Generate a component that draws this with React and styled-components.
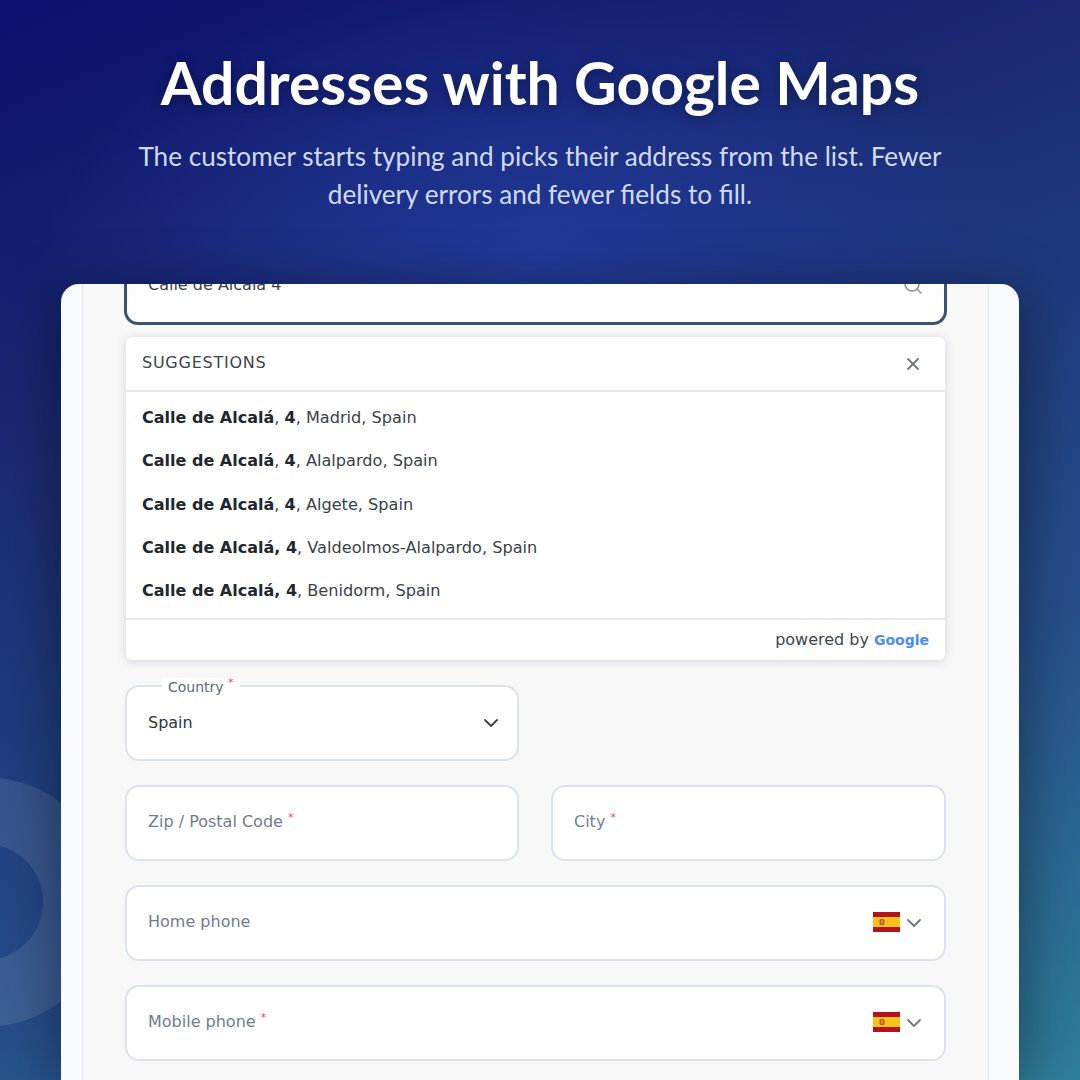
import React from 'react'
import styled, { createGlobalStyle } from 'styled-components'

const Global = createGlobalStyle`
  html, body { margin: 0; padding: 0; }
  body { width: 1080px; height: 1080px; overflow: hidden; font-family: "DejaVu Sans", sans-serif; }
`

const suggestions = [
  { main: 'Calle de Alcalá', sep: ', ', num: '4', rest: ', Madrid, Spain' },
  { main: 'Calle de Alcalá', sep: ', ', num: '4', rest: ', Alalpardo, Spain' },
  { main: 'Calle de Alcalá', sep: ', ', num: '4', rest: ', Algete, Spain' },
  { main: 'Calle de Alcalá, ', sep: '', num: '4', rest: ', Valdeolmos-Alalpardo, Spain' },
  { main: 'Calle de Alcalá, ', sep: '', num: '4', rest: ', Benidorm, Spain' },
]

const Chevron = ({ color = '#6b7684' }) => (
  <svg width="16" height="16" viewBox="0 0 16 16" fill="none" stroke={color} strokeWidth="1.8" strokeLinecap="round" strokeLinejoin="round">
    <path d="M2 5 L8 11 L14 5" />
  </svg>
)

const SpainFlag = () => (
  <FlagSvg width="27" height="20" viewBox="0 0 27 20">
    <rect width="27" height="20" fill="#b5121b" />
    <rect y="5" width="27" height="10" fill="#f6c21c" />
    <rect x="6.5" y="7" width="5" height="6" rx="1.5" fill="#c0562a" />
    <rect x="8" y="8.5" width="2" height="3" fill="#e09a3a" />
  </FlagSvg>
)

const App = () => (
  <Page>
    <Global />
    <RingDecor />
    <Hero>
      <Title>Addresses with Google Maps</Title>
      <Subtitle>
        The customer starts typing and picks their address from the list. Fewer delivery errors and fewer fields to fill.
      </Subtitle>
    </Hero>
    <Card>
      <Column>
        <SearchBox>
          <SearchText>Calle de Alcalá 4</SearchText>
          <SearchIcon width="20" height="20" viewBox="0 0 20 20" fill="none" stroke="#8b929b" strokeWidth="1.6" strokeLinecap="round">
            <circle cx="9" cy="9" r="7" />
            <path d="M14 14 L18 18" />
          </SearchIcon>
        </SearchBox>

        <Panel>
          <PanelHeader>
            <PanelTitle>SUGGESTIONS</PanelTitle>
            <svg width="12" height="12" viewBox="0 0 12 12" stroke="#6f7680" strokeWidth="1.8" strokeLinecap="round">
              <path d="M1 1 L11 11 M11 1 L1 11" />
            </svg>
          </PanelHeader>
          <SuggestionList>
            {suggestions.map((s) => (
              <Suggestion key={s.rest}>
                <b>{s.main}</b>{s.sep}<b>{s.num}</b>{s.rest}
              </Suggestion>
            ))}
          </SuggestionList>
          <PanelFooter>
            <PoweredBy>powered by</PoweredBy> <GoogleMark>Google</GoogleMark>
          </PanelFooter>
        </Panel>

        <FieldGrid>
          <Field>
            <FloatingLabel>Country <Star>*</Star></FloatingLabel>
            <Value>Spain</Value>
            <SelectArrow><Chevron color="#3a4149" /></SelectArrow>
          </Field>
          <div />
          <Field>
            <Placeholder>Zip / Postal Code <Star>*</Star></Placeholder>
          </Field>
          <Field>
            <Placeholder>City <Star>*</Star></Placeholder>
          </Field>
          <Field $wide>
            <Placeholder>Home phone</Placeholder>
            <PhoneAddon><SpainFlag /><Chevron /></PhoneAddon>
          </Field>
          <Field $wide>
            <Placeholder>Mobile phone <Star>*</Star></Placeholder>
            <PhoneAddon><SpainFlag /><Chevron /></PhoneAddon>
          </Field>
        </FieldGrid>
      </Column>
    </Card>
  </Page>
)

const Page = styled.div`
  position: relative;
  width: 1080px;
  height: 1080px;
  overflow: hidden;
  display: flex;
  flex-direction: column;
  align-items: center;
  background:
    radial-gradient(ellipse 500px 280px at 540px 260px, rgba(36, 62, 165, 0.75), rgba(36, 62, 165, 0) 100%),
    linear-gradient(158deg, #0c0f6e 0%, #1a2a72 30%, #264e8a 68%, #2f7f9b 100%);
`

const RingDecor = styled.div`
  position: absolute;
  left: -140px;
  top: 777px;
  width: 250px;
  height: 250px;
  box-sizing: border-box;
  border-radius: 50%;
  border: 67px solid rgba(255, 255, 255, 0.1);
`

const Hero = styled.header`
  position: relative;
  width: 840px;
  height: 284px;
  flex-shrink: 0;
  padding-top: 47px;
  box-sizing: border-box;
  text-align: center;
  font-family: Lato, sans-serif;
`

const Title = styled.h1`
  margin: 0 -40px;
  font-size: 58.85px;
  line-height: 72px;
  font-weight: 700;
  color: #fff;
  white-space: nowrap;
  text-shadow: 0 2px 12px rgba(0, 0, 0, 0.35);
`

const Subtitle = styled.p`
  margin: 18px 0 0;
  font-size: 26.15px;
  line-height: 38px;
  font-weight: 400;
  color: #cfdaf5;
`

const Card = styled.main`
  position: relative;
  width: 958px;
  flex: 1;
  display: flex;
  flex-direction: column;
  box-sizing: border-box;
  padding: 0 30px 0 21px;
  background: #f9fafc;
  border-radius: 18px 18px 0 0;
  box-shadow: 0 10px 60px rgba(0, 0, 0, 0.45);
  overflow: hidden;
`

const Column = styled.div`
  flex: 1;
  box-sizing: border-box;
  padding: 0 42px;
  background: #f8f8f9;
  border-left: 1px solid #e4e8f0;
  border-right: 1px solid #e4e8f0;
`

const SearchBox = styled.div`
  height: 75px;
  margin: -34px -1px 0 -1px;
  box-sizing: border-box;
  display: flex;
  align-items: center;
  justify-content: space-between;
  padding: 0 21px;
  background: #fff;
  border: 3px solid #3b5370;
  border-radius: 14px;
`

const SearchText = styled.span`
  font-size: 16px;
  color: #3a4149;
  margin-top: -7px;
`

const SearchIcon = styled.svg`
  margin-top: -6px;
`

const Panel = styled.section`
  margin: 12px 1px 25px;
  background: #fff;
  border-radius: 6px;
  box-shadow: 0 1px 10px rgba(30, 40, 60, 0.18);
  color: #333a42;
`

const PanelHeader = styled.div`
  height: 55px;
  box-sizing: border-box;
  display: flex;
  align-items: center;
  justify-content: space-between;
  padding: 0 26px 0 16px;
  border-bottom: 2px solid #e6e9ef;
`

const PanelTitle = styled.span`
  font-size: 16px;
  letter-spacing: 0.75px;
  color: #3c4450;
  margin-top: -3px;
`

const SuggestionList = styled.ul`
  list-style: none;
  margin: 0;
  padding: 4px 16px 0;
  height: 228px;
  box-sizing: border-box;
  border-bottom: 2px solid #e6e9ef;
`

const Suggestion = styled.li`
  height: 43.3px;
  line-height: 43.3px;
  font-size: 16.15px;
  color: #3a4149;
  white-space: nowrap;

  b {
    font-size: 16px;
    font-weight: 700;
    color: #22272e;
  }
`

const PanelFooter = styled.div`
  height: 40px;
  display: flex;
  align-items: center;
  justify-content: flex-end;
  gap: 5px;
  padding: 0 16px;
  font-size: 16px;
  color: #40464e;
`

const PoweredBy = styled.span`
  margin-top: -2px;
`

const GoogleMark = styled.span`
  font-weight: 700;
  font-size: 14px;
  color: #4c8bf5;
`

const FieldGrid = styled.div`
  display: grid;
  grid-template-columns: 394px 395px;
  column-gap: 32px;
  row-gap: 24px;
`

const Field = styled.div`
  position: relative;
  grid-column: ${(p) => (p.$wide ? '1 / -1' : 'auto')};
  height: 76px;
  box-sizing: border-box;
  display: flex;
  align-items: center;
  justify-content: space-between;
  padding: 0 21px;
  background: #fff;
  border: 2px solid #dce3ee;
  border-radius: 14px;
`

const FloatingLabel = styled.label`
  position: absolute;
  left: 35px;
  top: -9px;
  padding: 0 6px;
  background: #fff;
  font-size: 14px;
  line-height: 18px;
  color: #5b6b80;
`

const Star = styled.sup`
  color: #e2505f;
  font-size: 11px;
  line-height: 0;
`

const Value = styled.span`
  font-size: 16px;
  color: #2f353d;
  margin-top: -2px;
`

const SelectArrow = styled.span`
  display: flex;
  margin-right: -3px;
`

const Placeholder = styled.span`
  font-size: 16px;
  color: #6f7d90;
  margin-top: -4px;
`

const PhoneAddon = styled.div`
  display: flex;
  align-items: center;
  gap: 6px;
  margin-right: 1px;
`

const FlagSvg = styled.svg`
  margin-top: -2px;
`

export default App
